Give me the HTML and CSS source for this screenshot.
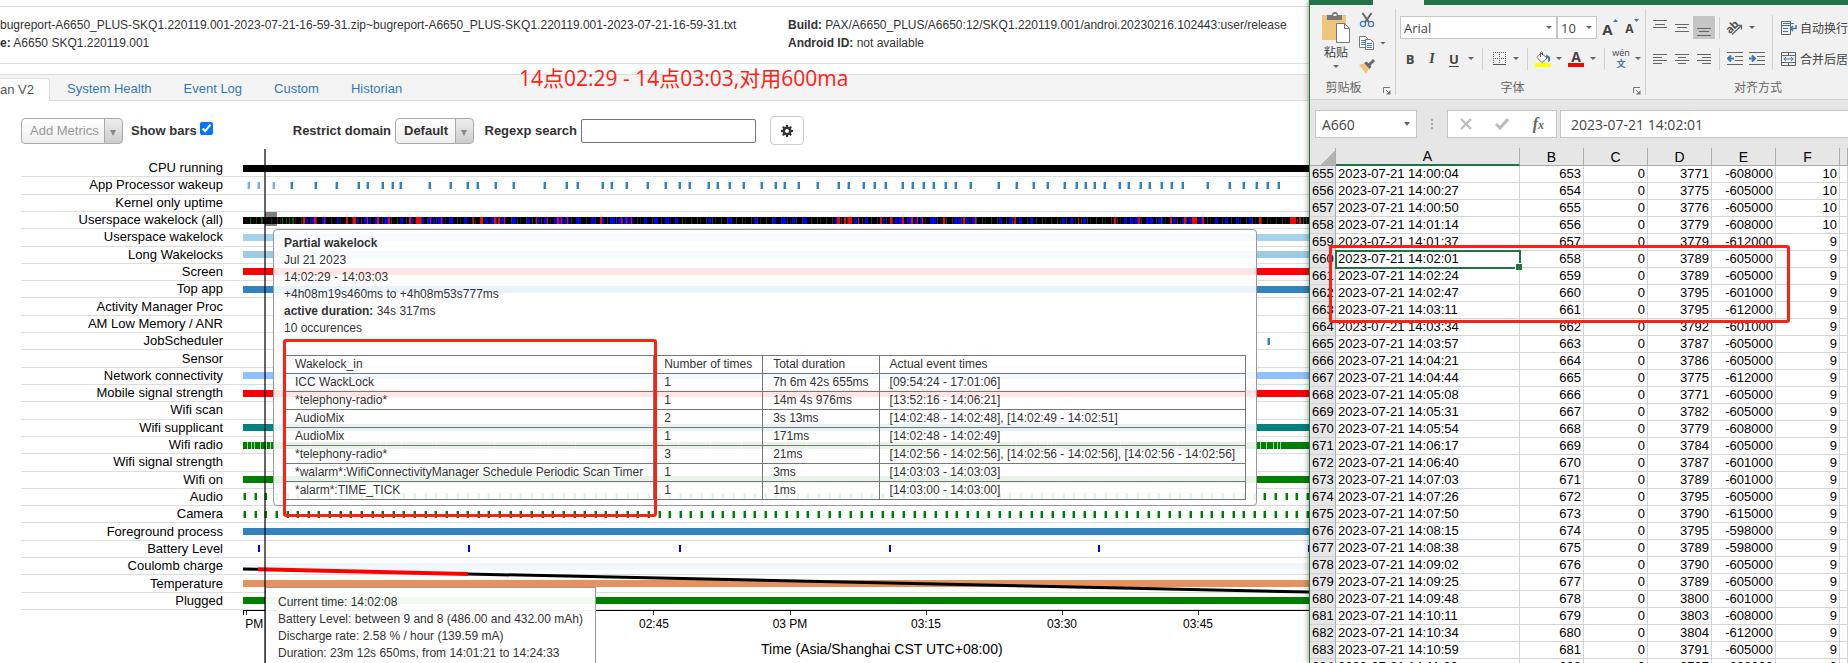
FILE: index.html
```html
<!DOCTYPE html>
<html lang="zh-CN">
<head>
<meta charset="utf-8">
<title>Battery Historian</title>
<link rel="stylesheet" href="styles.css">
</head>
<body>
<div class="desktop">
  <main class="historian">
    <header class="report">
      <div class="report-col">
        <p>bugreport-A6650_PLUS-SKQ1.220119.001-2023-07-21-16-59-31.zip~bugreport-A6650_PLUS-SKQ1.220119.001-2023-07-21-16-59-31.txt</p>
        <p><b>e:</b> A6650 SKQ1.220119.001</p>
      </div>
      <div class="report-col">
        <p><b>Build:</b> PAX/A6650_PLUS/A6650:12/SKQ1.220119.001/androi.20230216.102443:user/release</p>
        <p><b>Android ID:</b> not available</p>
      </div>
    </header>

    <nav class="tabs">
      <a class="tab active" href="#v2">an V2</a>
      <a class="tab" href="#health">System Health</a>
      <a class="tab" href="#log">Event Log</a>
      <a class="tab" href="#custom">Custom</a>
      <a class="tab" href="#historian">Historian</a>
    </nav>

    <form class="controls">
      <select class="picker picker-metrics" aria-label="Add Metrics"><option>Add Metrics</option></select>
      <label class="control-label bars-label" for="bars">Show bars</label>
      <input class="bars-check" id="bars" type="checkbox" checked>
      <label class="control-label domain-label" for="domain">Restrict domain</label>
      <select class="picker picker-domain" id="domain"><option>Default</option></select>
      <label class="control-label search-label" for="search">Regexp search</label>
      <input class="search" id="search" type="text">
      <button class="gear" type="button" aria-label="Settings">
        <svg width="12" height="12" viewBox="0 0 12 12"><g fill="#333"><circle cx="6" cy="6" r="4.300"/><path d="M5 0h2l.4 3H4.600zM5 12h2l.4-3H4.600zM0 5v2l3 .4V4.600zM12 5v2l-3 .4V4.600zM1.100 2.500l1.400-1.400 2 1.600-1.800 1.800zM10.900 2.500L9.500 1.100l-2 1.600 1.800 1.800zM1.100 9.500l1.400 1.400 2-1.600-1.800-1.800zM10.900 9.500l-1.400 1.400-2-1.600 1.800-1.800z"/></g><circle cx="6" cy="6" r="2" fill="#fff"/></svg>
      </button>
    </form>

    <section class="chart">
      <div class="rows" id="rows"></div>
      <svg class="charge-line" width="1066" height="450">
        <path d="M0 9L15 9.300M225 14L1066 32" transform="translate(0 400)" stroke="#000" stroke-width="3"/>
        <path d="M15 9.300L225 14" transform="translate(0 400)" stroke="#f00" stroke-width="4"/>
      </svg>
      <svg class="axis" width="1066" height="26">
        <path d="M0 .5H1066M.5 0V5" stroke="#000"/>
        <path d="M3.500 1V5M410.500 1V5M547.500 1V5M683.500 1V5M819.500 1V5M955.500 1V5" stroke="#333"/>
        <text x="3" y="18">02 PM</text><text x="411" y="18">02:45</text><text x="547" y="18">03 PM</text>
        <text x="683" y="18">03:15</text><text x="819" y="18">03:30</text><text x="955" y="18">03:45</text>
      </svg>
      <p class="axis-title">Time (Asia/Shanghai CST UTC+08:00)</p>
    </section>

    <div class="hover-block"></div>

    <aside class="tooltip wakelock-tip">
      <p><b>Partial wakelock</b></p>
      <p>Jul 21 2023</p>
      <p>14:02:29 - 14:03:03</p>
      <p>+4h08m19s460ms to +4h08m53s777ms</p>
      <p><b>active duration:</b> 34s 317ms</p>
      <p>10 occurences</p>
      <table class="events">
        <tbody>
        <tr><td>Wakelock_in</td><td>Number of times</td><td>Total duration</td><td>Actual event times</td></tr>
        <tr><td>ICC WackLock</td><td>1</td><td>7h 6m 42s 655ms</td><td>[09:54:24 - 17:01:06]</td></tr>
        <tr><td>*telephony-radio*</td><td>1</td><td>14m 4s 976ms</td><td>[13:52:16 - 14:06:21]</td></tr>
        <tr><td>AudioMix</td><td>2</td><td>3s 13ms</td><td>[14:02:48 - 14:02:48], [14:02:49 - 14:02:51]</td></tr>
        <tr><td>AudioMix</td><td>1</td><td>171ms</td><td>[14:02:48 - 14:02:49]</td></tr>
        <tr><td>*telephony-radio*</td><td>3</td><td>21ms</td><td>[14:02:56 - 14:02:56], [14:02:56 - 14:02:56], [14:02:56 - 14:02:56]</td></tr>
        <tr><td>*walarm*:WifiConnectivityManager Schedule Periodic Scan Timer</td><td>1</td><td>3ms</td><td>[14:03:03 - 14:03:03]</td></tr>
        <tr><td>*alarm*:TIME_TICK</td><td>1</td><td>1ms</td><td>[14:03:00 - 14:03:00]</td></tr>
        </tbody>
      </table>
    </aside>

    <aside class="tooltip battery-tip">
      <p>Current time: 14:02:08</p>
      <p>Battery Level: between 9 and 8 (486.00 and 432.00 mAh)</p>
      <p>Discharge rate: 2.58 % / hour (139.59 mA)</p>
      <p>Duration: 23m 12s 650ms, from 14:01:21 to 14:24:33</p>
    </aside>
    <div class="cursor-line"></div>
    <div class="mark mark-wakelocks"></div>
    <p class="note">14点02:29 - 14点03:03,对用600ma</p>
  </main>

  <section class="excel">
    <div class="titlebar"><div class="ribbon-tab"></div></div>
    <div class="ribbon">
      <div class="group group-clipboard">
        <div class="tools">
          <button class="tool paste" type="button">
            <svg width="30" height="31" viewBox="0 0 30 31"><path d="M1 3h24v25H1z" fill="#edc67c"/><path d="M6 3h5a3 3 0 0 1 6 0h4v5H6z" fill="#777"/><path d="M12.500 2h3v2h-3z" fill="#f1f1f1"/><path d="M15.500 11.500h8l5 5v14h-13z" fill="#fff" stroke="#777"/><path d="M23.500 11.500v5h5" fill="none" stroke="#777"/></svg>
            <span>粘贴</span><i class="caret"></i>
          </button>
          <div class="clip-tools">
            <button class="tool" type="button" aria-label="剪切"><svg width="16" height="16" viewBox="0 0 16 16" fill="none"><path d="M3.500 1L10 10.500M12.500 1L6 10.500" stroke="#666" stroke-width="2"/><circle cx="4" cy="12" r="2.600" stroke="#4178b4" stroke-width="1.300"/><circle cx="12" cy="12" r="2.600" stroke="#4178b4" stroke-width="1.300"/></svg></button>
            <button class="tool" type="button" aria-label="复制"><svg width="16" height="16" viewBox="0 0 16 16"><path d="M.5 1.500h6l2 2v9h-8z" fill="#fff" stroke="#777"/><path d="M2 5.500h4M2 7.500h4M2 9.500h4" stroke="#4178b4"/><path d="M6.500 4.500h5l3 3v7h-8z" fill="#fff" stroke="#777"/><path d="M8 8.500h5M8 10.500h5M8 12.500h5" stroke="#4178b4"/></svg><i class="caret"></i></button>
            <button class="tool" type="button" aria-label="格式刷"><svg width="16" height="16" viewBox="0 0 16 16"><path d="M0 7l5-1.500L10 11l-3 4.500z" fill="#edc67c"/><path d="M5 5l2.500-1.500 5 5L10.500 11z" fill="#666"/><path d="M9 6l5-5 2 2-5 5z" fill="#666"/></svg></button>
          </div>
        </div>
        <div class="group-name">剪贴板<svg class="launcher" width="8" height="8" viewBox="0 0 8 8"><path d="M.5 6V.5H7M3 3l3 3" fill="none" stroke="#777"/><path d="M7.500 3v4.500H3z" fill="#777"/></svg></div>
      </div>

      <div class="group group-font">
        <div class="tools tool-rows">
          <div class="tool-row">
            <select class="font-box font-name" aria-label="字体"><option>Arial</option></select>
            <select class="font-box font-size" aria-label="字号"><option>10</option></select>
            <button class="tool grow" type="button" aria-label="增大字号"><b>A</b><svg width="5" height="3"><path d="M0 3h5L2.500 0z" fill="#4178b4"/></svg></button>
            <button class="tool grow shrink" type="button" aria-label="减小字号"><b>A</b><svg width="5" height="3"><path d="M0 0h5L2.500 3z" fill="#4178b4"/></svg></button>
          </div>
          <div class="tool-row">
            <button class="tool w22 bold" type="button">B</button>
            <button class="tool w22 italic" type="button">I</button>
            <button class="tool w22 under" type="button">U</button>
            <i class="caret"></i>
            <span class="sep"></span>
            <button class="tool w22" type="button" aria-label="边框"><svg width="13" height="14"><path d="M.5 0V13M6.500 0V13M12.500 0V13M0 .5H13M0 6.500H13" stroke="#666" stroke-dasharray="1 1"/><path d="M0 12.500H13" stroke="#555"/></svg></button>
            <i class="caret"></i>
            <span class="sep"></span>
            <button class="tool w20" type="button" aria-label="填充颜色"><svg width="16" height="16" viewBox="0 0 16 16"><path d="M6 2l6 5-5 4.500-5-5z" fill="#fff" stroke="#666"/><path d="M5.500 6V1.500q1-1.500 2 0V4" fill="none" stroke="#666"/><path d="M11 4q5 0 4 6l-2 1q1-4-2-5z" fill="#4178b4"/><path d="M0 12h16v4H0z" fill="#ff0"/></svg></button>
            <i class="caret"></i>
            <button class="tool w22 font-color" type="button"><b>A</b></button>
            <i class="caret"></i>
            <span class="sep"></span>
            <button class="tool w22 pinyin" type="button"><span>wén</span><b>文</b></button>
            <i class="caret"></i>
          </div>
        </div>
        <div class="group-name">字体<svg class="launcher" width="8" height="8" viewBox="0 0 8 8"><path d="M.5 6V.5H7M3 3l3 3" fill="none" stroke="#777"/><path d="M7.500 3v4.500H3z" fill="#777"/></svg></div>
      </div>

      <div class="group group-align">
        <div class="tools">
          <div class="tool-rows">
            <div class="tool-row">
              <button class="tool w22" type="button" aria-label="顶端对齐"><svg width="14" height="20"><path d="M0 2.500h14M2 6.500h10M0 9.500h14" stroke="#666"/></svg></button>
              <button class="tool w22" type="button" aria-label="垂直居中"><svg width="14" height="20"><path d="M0 6.500h14M2 9.500h10M0 13.500h14" stroke="#666"/></svg></button>
              <button class="tool w22 pressed" type="button" aria-label="底端对齐"><svg width="14" height="20"><path d="M0 10.500h14M2 13.500h10M0 17.500h14" stroke="#666"/></svg></button>
              <span class="sep sep-tight"></span>
              <button class="tool w22 orient" type="button" aria-label="方向"><svg width="18" height="18" viewBox="0 0 18 18"><text x="0" y="12" transform="rotate(-45 6 9)">ab</text><path d="M6 15.500L15 7M11.500 6.500h4v4" fill="none" stroke="#666" stroke-width="1.300"/></svg></button>
              <i class="caret"></i>
            </div>
            <div class="tool-row">
              <button class="tool w22" type="button" aria-label="左对齐"><svg width="14" height="12"><path d="M0 1.500h14M0 4.500h9M0 7.500h14M0 10.500h9" stroke="#666"/></svg></button>
              <button class="tool w22" type="button" aria-label="居中"><svg width="14" height="12"><path d="M0 1.500h14M3 4.500h8M0 7.500h14M3 10.500h8" stroke="#666"/></svg></button>
              <button class="tool w22" type="button" aria-label="右对齐"><svg width="14" height="12"><path d="M0 1.500h14M5 4.500h9M0 7.500h14M5 10.500h9" stroke="#666"/></svg></button>
              <span class="sep sep-tight"></span>
              <button class="tool w22" type="button" aria-label="减少缩进"><svg width="16" height="14"><path d="M0 .5h16M8 4.500h8M8 8.500h8M0 12.500h16" stroke="#666"/><path d="M7 6.500H2M4 3.500l-3 3 3 3" fill="none" stroke="#4178b4" stroke-width="2"/></svg></button>
              <button class="tool w22" type="button" aria-label="增加缩进"><svg width="16" height="14"><path d="M0 .5h16M8 4.500h8M8 8.500h8M0 12.500h16" stroke="#666"/><path d="M0 6.500H5M3 3.500l3 3-3 3" fill="none" stroke="#4178b4" stroke-width="2"/></svg></button>
            </div>
          </div>
          <span class="sep sep-tall"></span>
          <div class="tool-rows wrap-tools">
            <button class="tool wide" type="button"><svg width="16" height="16" viewBox="0 0 16 16" fill="none"><path d="M.5 1.500h9v13h-9zM0 5.500h10" stroke="#666"/><path d="M2 3.500h11M2 8.500h5M2 11.500h5" stroke="#4178b4"/><path d="M15 5v3.500h-5M12 6l-2.500 2.500L12 11" stroke="#4178b4" stroke-width="1.500"/></svg>自动换行</button>
            <button class="tool wide" type="button"><svg width="16" height="16" viewBox="0 0 16 16" fill="none"><path d="M.5 1.500h14v13H.5zM0 4.500h15M0 11.500h15M7.500 1v3M7.500 12v3" stroke="#666"/><path d="M2.500 8h10M5 6L3 8l2 2M10 6l2 2-2 2" stroke="#4178b4"/></svg>合并后居中</button>
          </div>
        </div>
        <div class="group-name">对齐方式</div>
      </div>
    </div>

    <div class="formula-bar">
      <label class="name-box"><input type="text" value="A660" aria-label="名称框"><i class="caret"></i></label>
      <span class="grip"></span>
      <div class="formula-buttons">
        <svg width="12" height="12"><path d="M1 1l10 10M11 1L1 11" stroke="#bbb" stroke-width="2"/></svg>
        <svg width="14" height="12"><path d="M1 6l4 4 8-9" fill="none" stroke="#bbb" stroke-width="3"/></svg>
        <span class="fx"><i>f</i><i class="fx-x">x</i></span>
      </div>
      <input class="formula" type="text" value="2023-07-21 14:02:01" aria-label="编辑栏">
    </div>

    <table class="sheet">
      <colgroup><col class="c-head"><col class="c-date"><col class="c-num"><col class="c-num"><col class="c-num"><col class="c-num"><col class="c-num"><col></colgroup>
      <thead><tr><th class="corner"></th><th class="current">A</th><th>B</th><th>C</th><th>D</th><th>E</th><th>F</th><th></th></tr></thead>
      <tbody id="cells"></tbody>
    </table>
    <div class="mark mark-cells"></div>
  </section>
</div>
<script src="app.js"></script>
</body>
</html>
```

FILE: styles.css
```css
* { box-sizing: border-box; }
body { margin: 0; font-family: "Liberation Sans", Arial, sans-serif; font-size: 13px; color: #333; background: #fff; }
p { margin: 0; white-space: nowrap; }
button, input, select { font: inherit; color: inherit; margin: 0; }
svg { display: block; flex: none; }

.desktop { display: grid; grid-template-columns: minmax(0, 1fr) 539px; height: 100vh; overflow: hidden; }

/* Historian page */
.historian { position: relative; min-width: 0; overflow: hidden; padding-top: 6px; }
.report { display: grid; grid-template-columns: 788px minmax(0, 1fr); padding: 9px 0 11px; border-top: 1px solid #ddd; border-bottom: 1px solid #ddd; font-size: 12px; line-height: 18px; overflow: hidden; }

.tabs { display: flex; align-items: flex-end; margin-top: 10px; height: 27px; background: #f4f4f4; border-top: 1px solid #ddd; border-bottom: 1px solid #ddd; }
.tab { padding: 0 16px; line-height: 22px; color: #337ab7; text-decoration: none; }
.tab.active { padding: 0 15px 0 0; margin: 0 1px -1px 0; background: #fff; color: #555; border: 1px solid #ddd; border-width: 1px 1px 0 0; border-radius: 0 4px 0 0; }

.controls { display: flex; align-items: center; height: 44px; padding: 15px 0 0 21px; }
.picker { appearance: none; height: 26px; padding: 0 8px; border: 1px solid #aaa; border-radius: 4px; background: url("data:image/svg+xml,%3Csvg xmlns='http://www.w3.org/2000/svg' width='18' height='24'%3E%3Cpath d='M.5 0V24' stroke='%23aaa'/%3E%3Cpath d='M6 11h6l-3 6z' fill='%23888'/%3E%3C/svg%3E") right / 18px 24px no-repeat, linear-gradient(#eee, #ccc) right / 18px 100% no-repeat, linear-gradient(#fff, #eee); }
.picker-metrics { width: 102px; color: #999; }
.picker-domain { width: 79px; font-weight: bold; }
.control-label { font-weight: bold; white-space: nowrap; }
.bars-label { width: 77px; padding-left: 8px; }
.bars-check { width: 13px; height: 13px; margin-bottom: 4px; accent-color: #0075ff; }
.domain-label { width: 182px; padding-right: 4px; text-align: right; }
.search-label { width: 107px; padding-right: 4px; text-align: right; }
.search { width: 175px; height: 24px; border: 1px solid #767676; border-radius: 2px; background: #fff; }
.gear { display: grid; place-items: center; width: 34px; height: 29px; margin-left: 14px; padding: 0; border: 1px solid #ccc; border-radius: 4px; background: #fff; }

.chart { position: relative; margin-top: 15px; }
.rows { display: grid; grid-template-rows: repeat(26, 1fr); height: 450px; margin-left: 21px; }
.row { display: grid; grid-template-columns: 202px minmax(0, 1fr); column-gap: 20px; align-items: center; border-bottom: 1px solid #ddd; color: #000; }
.row-name { text-align: right; line-height: 16px; }
.track { width: 100%; height: 7px; }
.charge-line { position: absolute; left: 243px; top: 0; }
.axis { margin-left: 243px; font-size: 12px; text-anchor: middle; }
.axis-title { margin: 4px 0 0 243px; padding-left: 518px; font-size: 14px; line-height: 18px; color: #000; }

.hover-block { position: absolute; left: 265px; top: 212px; width: 12px; height: 14px; background: rgba(0, 0, 0, .5); }
.cursor-line { position: absolute; left: 264px; top: 149px; bottom: 0; width: 2px; background: rgba(0, 0, 0, .6); }
.tooltip { position: absolute; background: rgba(255, 255, 255, .9); border: 1px solid #999; font-size: 12px; line-height: 17px; }
.wakelock-tip { left: 273px; top: 229px; padding: 5px 10px; border-radius: 4px; }
.battery-tip { left: 265px; top: 587px; width: 331px; height: 90px; padding: 6px 12px; background: rgba(255, 255, 255, .95); }
.events { margin-top: 18px; border-collapse: collapse; }
.events td { height: 18px; padding: 0 10px; border: 1px solid #777; line-height: 17px; white-space: nowrap; }

.mark { position: absolute; border: 3px solid #ff2013; border-radius: 3px; }
.mark-wakelocks { left: 283px; top: 339px; width: 374px; height: 178px; }
.note { position: absolute; left: 519px; top: 63px; font: 21px/30px "Open Sans", "Noto Sans CJK SC", sans-serif; color: #ff2013; }

/* Spreadsheet window */
.excel { position: relative; min-width: 0; border-left: 1px solid #217346; background: #e6e6e6; box-shadow: 0 0 6px rgba(0, 0, 0, .5); overflow: hidden; color: #444; clip-path: inset(0 0 0 -6px); }
.titlebar { height: 5px; padding-left: 63px; background: #217346; }
.ribbon-tab { width: 51px; height: 5px; background: #f1f1f1; }
.ribbon { display: flex; height: 95px; padding: 4px 0; background: #f1f1f1; border-bottom: 1px solid #d0d0d0; font-family: "Noto Sans CJK SC", sans-serif; font-size: 12px; }
.group { display: grid; grid-template-rows: 70px 16px; border-right: 1px solid #d0d0d0; }
.group-clipboard { flex: 0 0 86px; }
.group-font { flex: 0 0 250px; }
.group-align { flex: 1 0 202px; border: 0; }
.group-name { position: relative; line-height: 16px; text-align: center; color: #666; }
.group-clipboard .group-name { padding-right: 18px; }
.group-align .group-name { padding-left: 10px; }
.group-font .group-name { padding-right: 16px; }
.launcher { position: absolute; right: 4px; bottom: 0; }
.tools { display: flex; }
.tool { display: flex; align-items: center; justify-content: center; height: 22px; padding: 0; border: 0; background: none; flex: none; }
.w22 { width: 22px; }
.w20 { width: 20px; }
.caret { flex: none; width: 12px; height: 3px; background: #666; clip-path: polygon(3px 0, 9px 0, 6px 100%); }
.paste { flex-direction: column; justify-content: flex-start; width: 36px; height: 64px; margin: 3px 0 0 8px; }
.paste span { line-height: 18px; }
.paste .caret { margin-top: 4px; }
.clip-tools { display: flex; flex-direction: column; align-items: flex-start; gap: 1px; margin-left: 5px; }
.clip-tools .caret { margin-left: 2px; }
.tool-rows { display: flex; flex-direction: column; gap: 8px; padding: 7px 0 0 3px; }
.tool-row { display: flex; align-items: center; height: 23px; }
.sep { flex: none; width: 1px; height: 22px; margin: 0 5px; background: #d0d0d0; }
.sep-tight { margin: 0 4px; }
.sep-tall { height: 55px; margin: 6px 8px 0 4px; }
.font-box { appearance: none; height: 23px; padding: 0 3px; border: 1px solid #c6c6c6; border-radius: 0; font: 13px "Open Sans", sans-serif; background: url("data:image/svg+xml,%3Csvg xmlns='http://www.w3.org/2000/svg' width='12' height='4'%3E%3Cpath d='M2 0h6L5 3z' fill='%23666'/%3E%3C/svg%3E") right center no-repeat #fff; }
.font-name { width: 157px; margin-left: 1px; }
.font-size { width: 40px; }
.grow { align-items: flex-start; width: 22px; padding-left: 4px; font-family: "Open Sans", sans-serif; font-size: 15px; line-height: 24px; }
.grow svg { margin-top: 2px; }
.shrink { font-size: 12px; }
.bold { font: bold 13px "Open Sans", sans-serif; }
.italic { font: italic bold 14px "Liberation Serif", serif; }
.under { font: bold 13px "Open Sans", sans-serif; text-decoration: underline; text-underline-offset: 2px; }
.font-color { height: 17px; align-items: flex-start; }
.font-color b { width: 16px; height: 17px; border-bottom: 4px solid #f00; font: bold 14px/14px "Open Sans", sans-serif; }
.pinyin { flex-direction: column; font-family: "Open Sans", "Noto Sans CJK SC", sans-serif; font-size: 9px; line-height: 10px; }
.pinyin b { color: #4178b4; line-height: 12px; }
.pressed { height: 23px; background: #c5c5c5; }
.orient { font: bold 11px "Open Sans", sans-serif; fill: #555; }
.wrap-tools { padding-left: 0; }
.wide { gap: 3px; height: 23px; justify-content: flex-start; white-space: nowrap; }

.formula-bar { display: flex; align-items: center; gap: 3px; padding: 10px 0 10px 5px; font: 14px "Open Sans", sans-serif; }
.name-box { display: flex; align-items: center; width: 102px; height: 28px; padding: 0 3px 0 6px; border: 1px solid #c6c6c6; background: #fff; }
.name-box input { flex: 1; min-width: 0; padding: 0; border: 0; background: none; }
.name-box .caret { height: 4px; }
.grip { width: 2px; height: 11px; margin: 0 11px; background: repeating-linear-gradient(#aaa 0 2px, transparent 2px 4px); }
.formula-buttons { display: flex; align-items: center; justify-content: space-between; width: 110px; height: 28px; padding: 0 12px; border: 1px solid #c6c6c6; background: #fff; }
.fx { font: bold 16px "Liberation Serif", serif; color: #666; }
.fx-x { font-size: 12px; }
.formula { flex: 1; min-width: 0; height: 28px; padding: 0 10px; border: 1px solid #c6c6c6; border-right: 0; border-radius: 0; background: #fff; }

.sheet { table-layout: fixed; width: 100%; border-collapse: separate; border-spacing: 0; background: #fff; color: #000; }
.c-head { width: 26px; }
.c-date { width: 184px; }
.c-num { width: 64px; }
.sheet th, .sheet td { height: 17px; padding: 0 2px; border-right: 1px solid #d4d4d4; border-bottom: 1px solid #d4d4d4; font-weight: normal; line-height: 16px; text-align: right; white-space: nowrap; }
.sheet thead th { border-color: #ababab; background: #e6e6e6; font-size: 14px; text-align: center; }
.sheet tbody th { padding: 0 2px; border-right-color: #ababab; background: #e6e6e6; }
.sheet td.date { text-align: left; }
.sheet thead .current { border-bottom: 2px solid #217346; }
.sheet .corner { background: linear-gradient(135deg, #e6e6e6 66%, #b4b4b4 66%); }
.sheet .selected { position: relative; outline: 2px solid #217346; outline-offset: -1px; }
.sheet .selected::after { content: ""; position: absolute; right: -3px; bottom: -3px; width: 6px; height: 6px; border: 1px solid #fff; border-width: 1px 0 0 1px; background: #217346; }
.mark-cells { left: 19px; top: 245px; width: 461px; height: 78px; }
```

FILE: app.js
```js
const GREEN = '#008000', BLUE = '#3182bd';
const ORIGIN = 243;

const wakeups = [247.5, 257.7, 272.7, 290.500, 315, 336, 357.500, 367, 382, 391.500, 400, 428.500, 449.500, 467, 476.500, 494.500, 513, 544, 565.500, 576.500, 601.500, 611, 626, 647, 665, 679, 689, 708, 717, 729, 743, 761, 775, 784, 798, 817, 838, 848, 863, 873.500, 885, 902, 912, 923, 933, 945, 955, 970, 998, 1016, 1033, 1047, 1064, 1076, 1085, 1094, 1104, 1119, 1128, 1140, 1149, 1161, 1171, 1182, 1207, 1229, 1243, 1256, 1267, 1278];

/* Wakelock segments: colour letter and centre, with an optional width. */
const wakelocks = 'g251 g262 g283 g290 g294 r304:2 b307 b312:3 r315:2 b323:3 r325 b338 r347:2 r354:2 r356 b358 b365:3 r368 b370 b376:4 r378:2 b385:3 r389:2 b401:2 r410:2 b412 r417:3 r420:2 b423 b429:3 r431 b434 b439:4 r442 b450:3 b465:2 r474 r481:2 r483 b486:2 b492:2 r495:2 r499:2 b502:2 r505 b513:3 b528:2 r537 b539 b545:3 r548 b555:3 r558:2 b560:3 r562 b566:3 r568 b577:3 b592:3 r601:2 b603 b611:4 b619:3 r622 b625:3 r627 b630:3 r632 b645:2 b655:3 b666:3 b676:2 b709:2 b729:3 b755:2 b774:2 b782:4 b793:2 b804:3 b836:2 r838:3 r845:2 r849:3 r852 b855:2 r859 b866:2 r881:2 b884 r891:2 b896:2 b900:2 r903:2 b908:4 r912:2 b916:2 r918 b921:2 r923 b931:2 b934:2 r944:2 b955:2 b959:2 r964:2 b967:2 b973:2 r976 b1000:2 b1010:2 r1015:2 b1020:2 b1031:2 b1063:2 b1071:2 r1079 b1084:2 r1115:2 b1125:2 b1131:2 b1136:2 r1139:2 b1147:2 b1151:2 b1159:4 g1162 r1171:2 b1174:2 b1183:2 r1185:2 b1189:2 r1193:3 r1196:2 b1200:2 r1203:2 b1216:2 b1226:2 b1237:2 b1250:2 r1260:2 r1291:6 r1300:2 g1304';

const rect = (x, w, fill) => `<rect x="${x}" y="0" width="${w}" height="7" fill="${fill}"/>`;
const bar = (fill) => `<rect width="100%" height="7" fill="${fill}"/>`;
const tick = (x, core, edge) => rect(Math.round(x - ORIGIN) - 1, 3, edge) + rect(Math.round(x - ORIGIN), 2, core);

const range = (from, to, step) => {
  const out = [];
  for (let x = from; x < to; x += step) out.push(x);
  return out;
};

const appTicks = wakeups.map((x, i) => i < 3 ? tick(x, '#7ab3d8', '#c6dff0') : tick(x, BLUE, '#9ecae1')).join('');
const palette = { g: '#0a6a0a', r: '#ff0000', b: '#0000ff' };
const wakeBar = bar('#000')
  + range(250, 1309, 5).map((x, i) => rect(x - ORIGIN + (i * 7 % 3), 1, i % 3 ? '#333' : '#1c1c1c')).join('')
  + wakelocks.split(' ').map((s) => {
    const [pos, w] = s.slice(1).split(':');
    const width = s[0] === 'b' ? Number(w || 1) + 1 : Number(w || 1);
    return rect(pos - ORIGIN - 1, width, palette[s[0]]);
  }).join('');
const pulses = range(244, 1309, 10.63).map((x) => tick(x, GREEN, '#8cc68c')).join('');
const radio = bar(GREEN) + [247, 251, 254, 260, 266, 270, 310, 380, 386, 401, 436, 494, 540, 548, 575, 641, 665, 678, 710, 741, 785, 806, 871, 920, 1011, 1016, 1035, 1047, 1051, 1120, 1177, 1260, 1266, 1273, 1277, 1280]
  .map((x) => rect(x - ORIGIN, 1, '#9fd09f')).join('');
const levels = [259, 469, 680, 890, 1099, 1309].map((x) => rect(x - ORIGIN - 1, 2, '#0000ff')).join('');

const rows = [
  ['CPU running', bar('#000')],
  ['App Processor wakeup', appTicks],
  ['Kernel only uptime', ''],
  ['Userspace wakelock (all)', wakeBar],
  ['Userspace wakelock', bar('#a5d3ee')],
  ['Long Wakelocks', bar('#9ecae1')],
  ['Screen', bar('#ff0000')],
  ['Top app', bar(BLUE)],
  ['Activity Manager Proc', ''],
  ['AM Low Memory / ANR', ''],
  ['JobScheduler', tick(1268, BLUE, '#9ecae1')],
  ['Sensor', ''],
  ['Network connectivity', bar('#8dc1ff')],
  ['Mobile signal strength', bar('#ff0000')],
  ['Wifi scan', ''],
  ['Wifi supplicant', bar('#008080')],
  ['Wifi radio', radio],
  ['Wifi signal strength', ''],
  ['Wifi on', bar(GREEN)],
  ['Audio', pulses],
  ['Camera', pulses],
  ['Foreground process', bar(BLUE)],
  ['Battery Level', levels],
  ['Coulomb charge', bar('#f2f7fb')],
  ['Temperature', bar('#e6925f')],
  ['Plugged', bar(GREEN)],
];
document.getElementById('rows').innerHTML = rows
  .map(([name, shapes]) => `<div class="row"><span class="row-name">${name}</span><svg class="track">${shapes}</svg></div>`)
  .join('');

const samples = `00:04 3771 608 10|00:27 3775 605 10|00:50 3776 605 10|01:14 3779 608 10|01:37 3779 612 9|02:01 3789 605 9|02:24 3789 605 9|02:47 3795 601 9|03:11 3795 612 9|03:34 3792 601 9|03:57 3787 605 9|04:21 3786 605 9|04:44 3775 612 9|05:08 3771 605 9|05:31 3782 605 9|05:54 3779 608 9|06:17 3784 605 9|06:40 3787 601 9|07:03 3789 601 9|07:26 3795 605 9|07:50 3790 615 9|08:15 3795 598 9|08:38 3789 598 9|09:02 3790 605 9|09:25 3789 605 9|09:48 3800 601 9|10:11 3803 608 9|10:34 3804 612 9|10:59 3791 605 9|11:22 3797 608 9`;
document.getElementById('cells').innerHTML = samples.split('|').map((line, i) => {
  const [time, volt, amp, level] = line.split(' ');
  const row = 655 + i;
  return `<tr><th>${row}</th><td class="date${row === 660 ? ' selected' : ''}">2023-07-21 14:${time}</td><td>${row - 2}</td><td>0</td><td>${volt}</td><td>-${amp}000</td><td>${level}</td><td></td></tr>`;
}).join('');
```
